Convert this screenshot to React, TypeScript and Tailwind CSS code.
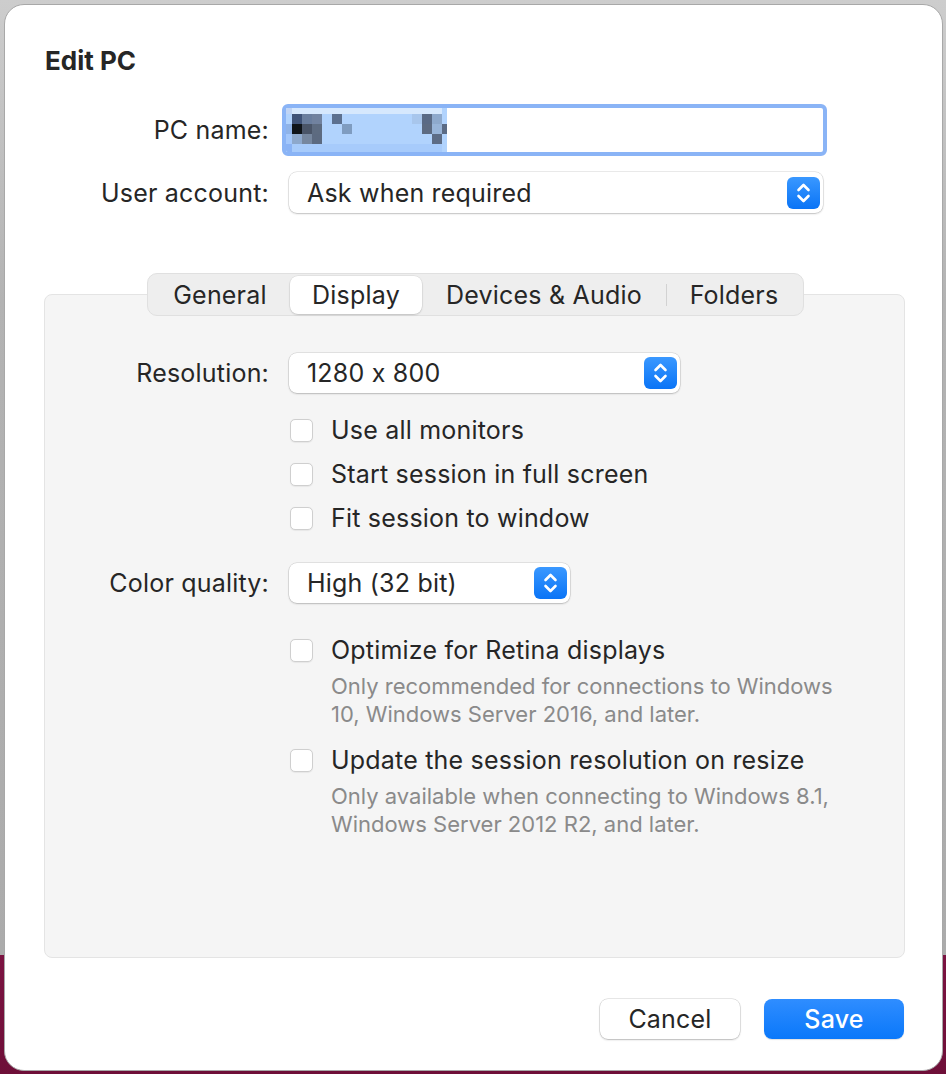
import React from "react";

const FONT = "font-['Inter','Liberation_Sans',sans-serif] [font-feature-settings:'calt'_0]";
const TXT = "text-[25px] tracking-[0.2px] text-[#262626]";

// pixelated (redacted) text selection inside the PC name field
const MOSAIC: [number, number, string][] = [
  [0, 0, "#c0d4f4"],
  [1, 1, "#3f5378"], [1, 2, "#6a7e9e"], [1, 3, "#71829f"], [1, 5, "#5c708f"],
  [1, 13, "#a8c6ec"], [1, 14, "#5a6a85"], [1, 15, "#8ea9cc"],
  [2, 0, "#8fb3e8"], [2, 1, "#0f1419"], [2, 2, "#4a5568"], [2, 3, "#5d6b80"],
  [2, 6, "#7f9cc0"], [2, 14, "#5d6b82"], [2, 15, "#98b4d8"], [2, 16, "#5b6b85"],
  [3, 0, "#a3c7fb"], [3, 1, "#8da8cc"], [3, 2, "#76879f"], [3, 3, "#5c6a80"],
  [3, 15, "#5d6c85"],
  [4, 0, "#8ab3f5"],
];

function Mosaic() {
  return (
    <svg width="165" height="50" viewBox="0 0 165 50" className="block shrink-0">
      <rect x="0" y="0" width="165" height="50" fill="#b1d3fd" />
      <rect x="0" y="0" width="160" height="10" fill="#d6e8fd" />
      <rect x="0" y="40" width="160" height="10" fill="#a7cbfb" />
      {MOSAIC.map(([r, c, fill]) => (
        <rect key={`${r}-${c}`} x={c * 10} y={r * 10} width="10" height="10" fill={fill} />
      ))}
    </svg>
  );
}

function Stepper() {
  return (
    <div className="w-[33px] h-[32px] rounded-[6px] bg-[linear-gradient(to_bottom,#3a98ff,#0a74f6)] flex items-center justify-center shrink-0">
      <svg width="33" height="32" viewBox="0 0 33 32" fill="none">
        <path d="M11.5 13 L16.5 8 L21.5 13" stroke="white" strokeWidth="2.6" strokeLinecap="round" strokeLinejoin="round" />
        <path d="M11.5 19 L16.5 24 L21.5 19" stroke="white" strokeWidth="2.6" strokeLinecap="round" strokeLinejoin="round" />
      </svg>
    </div>
  );
}

function Select({ value, width, height }: { value: string; width: string; height: string }) {
  return (
    <div
      className={`${width} ${height} bg-white rounded-[8px] shadow-[0_0_0_0.5px_rgba(0,0,0,0.16),0_1px_2px_rgba(0,0,0,0.18)] flex items-center justify-between pl-[18px] pr-[3px]`}
    >
      <span className={`${TXT} pt-[2px]`}>{value}</span>
      <Stepper />
    </div>
  );
}

function Checkbox({ label }: { label: string }) {
  return (
    <div className="flex items-center h-[44px]">
      <div className="w-[23px] h-[23px] ml-[1px] rounded-[5px] bg-white border border-[#cfcfcf] shadow-[0_0.5px_1px_rgba(0,0,0,0.06)] shrink-0" />
      <span className={`ml-[18px] pt-[2px] ${TXT}`}>{label}</span>
    </div>
  );
}

function Tabs() {
  return (
    <div className="flex justify-center pl-[4px] relative z-10 -mb-[22px]">
      <div className={`h-[43px] rounded-[10px] bg-[#eeeeee] border border-[#e0e0e0] p-[2px] flex items-center ${TXT}`}>
        <div className="w-[140px] text-center pt-[2px]">General</div>
        <div className="w-[132px] h-[38px] pt-[2px] rounded-[8px] bg-white shadow-[0_0_0_0.5px_rgba(0,0,0,0.08),0_1px_2px_rgba(0,0,0,0.15)] flex items-center justify-center">
          Display
        </div>
        <div className="w-[244px] text-center pt-[2px]">Devices &amp; Audio</div>
        <div className="w-px h-[22px] bg-[#d2d2d2]" />
        <div className="w-[134px] text-center pt-[2px]">Folders</div>
      </div>
    </div>
  );
}

export default function App() {
  return (
    <div
      className={`w-[946px] h-[1074px] overflow-hidden pt-[4px] pl-[4px] bg-[linear-gradient(to_bottom,#cdcdcd_0px,#b3b3b3_300px,#ababab_955px,#7b1341_955px,#6e0f38_1074px)] ${FONT}`}
    >
      <div className="w-[939px] h-[1067px] rounded-[20px] bg-white border border-[#a8a8a8] flex flex-col">
        {/* title */}
        <div className="h-[30px] mt-[41px] pl-[40px] text-[26px] font-bold text-[#262626] leading-[30px]">
          Edit PC
        </div>

        {/* PC name */}
        <div className="flex items-center mt-[28px] h-[52px]">
          <div className={`w-[264px] text-right pt-[2px] ${TXT}`}>PC name:</div>
          <div className="ml-[13px] w-[545px] h-[52px] rounded-[6px] border-[4px] border-[#8ab4f6] bg-white flex items-stretch overflow-hidden">
            <div className="-ml-[4px] -my-[4px]">
              <Mosaic />
            </div>
          </div>
        </div>

        {/* User account */}
        <div className="flex items-center mt-[16px]">
          <div className={`w-[264px] text-right pt-[2px] ${TXT}`}>User account:</div>
          <div className="ml-[20px]">
            <Select value="Ask when required" width="w-[534px]" height="h-[41px]" />
          </div>
        </div>

        {/* tabbed panel */}
        <div className="mt-[60px]">
          <Tabs />
          <div className="ml-[39px] w-[861px] h-[664px] rounded-[8px] bg-[#f5f5f5] border border-[#e4e4e4] flex flex-col">
            <div className="flex items-center mt-[58px]">
              <div className={`w-[224px] text-right pt-[2px] ${TXT}`}>Resolution:</div>
              <div className="ml-[20px]">
                <Select value="1280 x 800" width="w-[391px]" height="h-[40px]" />
              </div>
            </div>

            <div className="ml-[244px] mt-[15px] flex flex-col">
              <Checkbox label="Use all monitors" />
              <Checkbox label="Start session in full screen" />
              <Checkbox label="Fit session to window" />
            </div>

            <div className="flex items-center mt-[23px]">
              <div className={`w-[224px] text-right pt-[2px] ${TXT}`}>Color quality:</div>
              <div className="ml-[20px]">
                <Select value="High (32 bit)" width="w-[281px]" height="h-[40px]" />
              </div>
            </div>

            <div className="ml-[244px] mt-[25px] flex flex-col">
              <Checkbox label="Optimize for Retina displays" />
              <p className="ml-[42px] text-[22px] leading-[28px] text-[#8a8a8a]">
                Only recommended for connections to Windows
                <br />
                10, Windows Server 2016, and later.
              </p>
              <div className="mt-[10px]">
                <Checkbox label="Update the session resolution on resize" />
              </div>
              <p className="ml-[42px] text-[22px] leading-[28px] text-[#8a8a8a]">
                Only available when connecting to Windows 8.1,
                <br />
                Windows Server 2012 R2, and later.
              </p>
            </div>
          </div>
        </div>

        {/* buttons */}
        <div className="flex justify-end gap-[24px] mt-[41px] pr-[38px]">
          <button className={`w-[140px] h-[40px] pt-[2px] rounded-[8px] bg-white shadow-[0_0_0_0.5px_rgba(0,0,0,0.18),0_1px_2px_rgba(0,0,0,0.2)] ${TXT}`}>
            Cancel
          </button>
          <button className="w-[140px] h-[40px] pt-[2px] rounded-[8px] bg-[linear-gradient(to_bottom,#2f8dff,#0a78fa)] shadow-[0_1px_1px_rgba(0,0,0,0.12)] text-[25px] tracking-[0.2px] font-medium text-white">
            Save
          </button>
        </div>
      </div>
    </div>
  );
}
